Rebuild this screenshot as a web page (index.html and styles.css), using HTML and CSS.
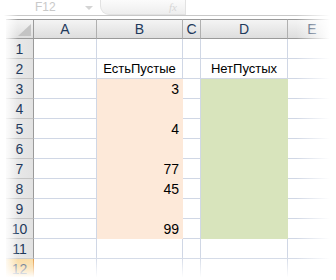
FILE: index.html
```html
<!DOCTYPE html>
<html lang="ru">
  <head>
    <meta charset="UTF-8" />
    <meta name="viewport" content="width=device-width, initial-scale=1.0" />
    <title>ЕстьПустые / НетПустых</title>
    <link rel="stylesheet" href="styles.css">
  </head>
  <body>
    <div class="sheet">
      <div class="formula-bar">
        <div class="name-box">F12</div>
        <div class="name-arrow"></div>
        <div class="fx-box"><span class="fx">fx</span></div>
      </div>

      <div class="grid">
        <div class="corner"></div>
        <div class="col-head">A</div>
        <div class="col-head">B</div>
        <div class="col-head">C</div>
        <div class="col-head">D</div>
        <div class="col-head last">E</div>
      </div>

      <div id="rows"></div>
      <div class="fade fade-left"></div>
      <div class="fade fade-right"></div>
      <div class="fade fade-bottom"></div>
    </div>

    <script>
      // data for column B, rows 1..12 (D is filled, but empty)
      let values = { 3: "3", 5: "4", 7: "77", 8: "45", 10: "99" };
      let rows = document.getElementById("rows");

      for (let r = 1; r <= 12; r++) {
        let row = document.createElement("div");
        row.className = "grid";
        let filled = r >= 3 && r <= 10;
        let b = r === 2 ? "ЕстьПустые" : values[r] || "";
        let d = r === 2 ? "НетПустых" : "";

        row.innerHTML =
          '<div class="row-head' + (r === 12 ? " active" : "") + '">' + r + "</div>" +
          '<div class="cell"></div>' +
          '<div class="cell' + (filled ? " peach" : "") + (r === 2 ? " center" : " num") + '">' + b + "</div>" +
          '<div class="cell"></div>' +
          '<div class="cell' + (filled ? " green" : "") + ' center">' + d + "</div>" +
          '<div class="cell last"></div>';
        rows.appendChild(row);
      }
    </script>
  </body>
</html>
```

FILE: styles.css
```css
body {
  margin: 0;
  background: #fff;
  font-family: "Liberation Sans", Arial, sans-serif;
  font-size: 13px;
  color: #000;
}

.sheet {
  position: relative;
  width: 336px;
  height: 280px;
  overflow: hidden;
}

/* formula bar */
.formula-bar {
  display: flex;
  align-items: flex-start;
  height: 15px;
  border-bottom: 1px solid #c8c8c8;
  margin-bottom: 3px;
  padding-left: 35px;
}

.name-box {
  width: 46px;
  height: 15px;
  line-height: 14px;
  color: #c9c9c9;
  font-size: 12px;
}

.name-arrow {
  width: 0;
  height: 0;
  margin: 6px 0 0 4px;
  border-left: 4px solid transparent;
  border-right: 4px solid transparent;
  border-top: 4px solid #d4d4d4;
}

.fx-box {
  margin-left: 7px;
  width: 86px;
  height: 15px;
  background: linear-gradient(#fbfbfb, #eeeeee);
  border: 1px solid #e2e2e2;
  border-top: none;
  border-radius: 0 0 0 9px;
  box-sizing: border-box;
  display: flex;
  justify-content: flex-end;
  align-items: center;
}

.fx {
  font-family: "Liberation Serif", serif;
  font-style: italic;
  font-size: 11px;
  color: #d6d6d6;
  margin-right: 8px;
}

/* grid */
.grid {
  display: grid;
  grid-template-columns: 28px 63px 86px 18px 87px 1fr;
  height: 20px;
  margin-left: 6px;
}

.corner,
.col-head {
  height: 20px;
  box-sizing: border-box;
  border-top: 1px solid #9a9a9a;
  border-bottom: 1px solid #9a9a9a;
  border-right: 1px solid #b0b0b0;
  background: linear-gradient(#f4f4f4, #dedede);
}

.corner {
  position: relative;
  border-right-color: #9a9a9a;
}

.corner::after {
  content: "";
  position: absolute;
  right: 2px;
  bottom: 2px;
  border-left: 13px solid transparent;
  border-bottom: 12px solid #c4c4c4;
}

.col-head {
  text-align: center;
  line-height: 18px;
  font-size: 14px;
  color: #1e395b;
}

.col-head.last {
  border-right: none;
}

.row-head {
  height: 20px;
  box-sizing: border-box;
  border-right: 1px solid #9a9a9a;
  border-bottom: 1px solid #c4c4c4;
  background: linear-gradient(90deg, #ececec, #e2e2e2);
  text-align: center;
  line-height: 20px;
  font-size: 14px;
  color: #1e395b;
}

.row-head.active {
  background: linear-gradient(#f9d99a, #f1b954);
  border-right-color: #e08a2a;
  color: #1e395b;
}

.cell {
  height: 20px;
  box-sizing: border-box;
  border-right: 1px solid #d0d7e5;
  border-bottom: 1px solid #d0d7e5;
  line-height: 20px;
  padding: 0 3px;
  white-space: nowrap;
}

.cell.last {
  border-right: none;
}

.cell.num {
  text-align: right;
  font-size: 14px;
}

.cell.center {
  text-align: center;
  padding: 0;
}

.cell.peach {
  background: #fde9d9;
  border-right-color: #fde9d9;
  border-bottom-color: #fde9d9;
}

.cell.green {
  background: #d8e4bc;
  border-right-color: #d8e4bc;
  border-bottom-color: #d8e4bc;
}

/* soft edges of the picture */
.fade {
  position: absolute;
  pointer-events: none;
}

.fade-left {
  left: 0;
  top: 0;
  bottom: 0;
  width: 18px;
  background: linear-gradient(90deg, #fff 20%, rgba(255, 255, 255, 0));
}

.fade-right {
  right: 0;
  top: 0;
  bottom: 0;
  width: 40px;
  background: linear-gradient(90deg, rgba(255, 255, 255, 0), #fff 85%);
}

.fade-bottom {
  left: 0;
  right: 0;
  bottom: 0;
  height: 24px;
  background: linear-gradient(rgba(255, 255, 255, 0), #fff 90%);
}
```
